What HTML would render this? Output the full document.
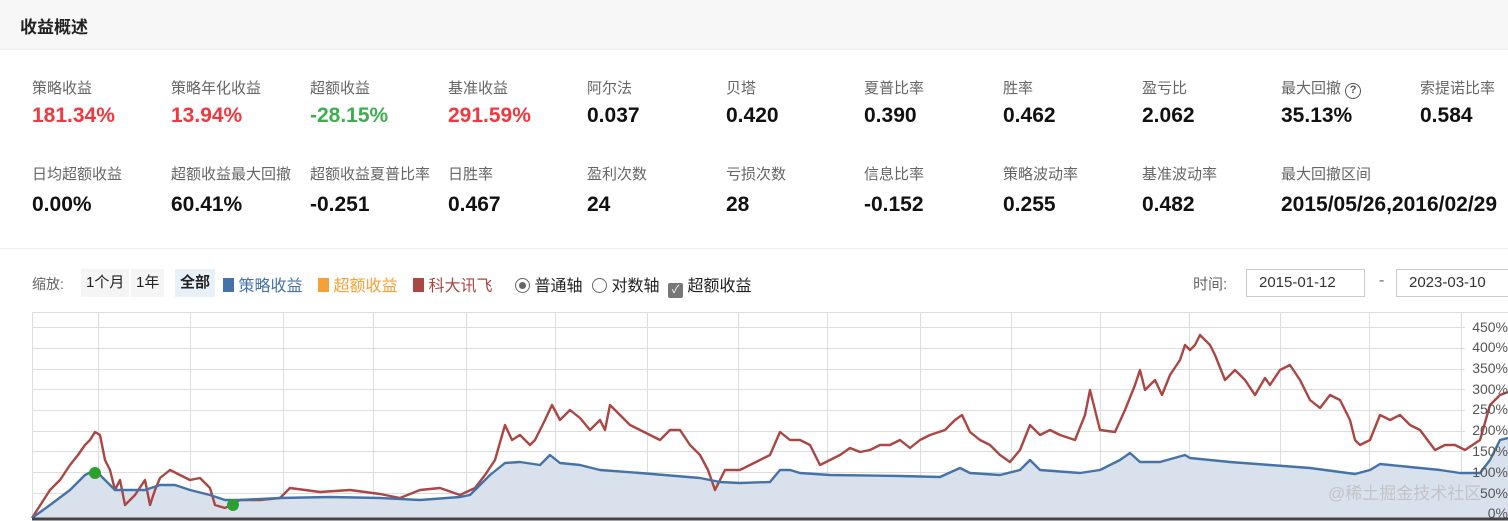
<!DOCTYPE html>
<html><head><meta charset="utf-8"><style>
*{margin:0;padding:0;box-sizing:border-box}
body{width:1508px;height:521px;overflow:hidden;background:#fff;font-family:"Liberation Sans","Noto Sans CJK SC",sans-serif;position:relative;color:#222}
.hd{position:absolute;left:0;top:0;width:1508px;height:50px;background:#f7f7f7;border-bottom:1px solid #eee}
.hd span{position:absolute;left:20px;top:13px;font-size:17px;font-weight:bold;color:#222}
.m{position:absolute;white-space:nowrap}
.l{font-size:15px;color:#666}
.v{font-size:21px;font-weight:bold;color:#111}
.r{color:#f0383f}.g{color:#3fae4f}
.div{position:absolute;left:0;top:248px;width:1508px;height:1px;background:#eee}
.ctl{position:absolute;top:272px;font-size:16px;white-space:nowrap}
.btn{position:absolute;top:269px;height:28px;line-height:28px;padding:0 5px;background:#f5f5f5;font-size:15px}
.inp{position:absolute;top:269px;height:28px;border:1px solid #ccc;font-size:15px;line-height:26px;padding-left:12px;color:#333}
.ax{position:absolute;right:0;width:50px;text-align:right;font-size:14px;color:#555}
</style></head><body>
<div class="hd"><span>收益概述</span></div>
<div class="m l" style="left:32px;top:77px">策略收益</div><div class="m v r" style="left:32px;top:104px">181.34%</div>
<div class="m l" style="left:171px;top:77px">策略年化收益</div><div class="m v r" style="left:171px;top:104px">13.94%</div>
<div class="m l" style="left:310px;top:77px">超额收益</div><div class="m v g" style="left:310px;top:104px">-28.15%</div>
<div class="m l" style="left:448px;top:77px">基准收益</div><div class="m v r" style="left:448px;top:104px">291.59%</div>
<div class="m l" style="left:587px;top:77px">阿尔法</div><div class="m v" style="left:587px;top:104px">0.037</div>
<div class="m l" style="left:726px;top:77px">贝塔</div><div class="m v" style="left:726px;top:104px">0.420</div>
<div class="m l" style="left:864px;top:77px">夏普比率</div><div class="m v" style="left:864px;top:104px">0.390</div>
<div class="m l" style="left:1003px;top:77px">胜率</div><div class="m v" style="left:1003px;top:104px">0.462</div>
<div class="m l" style="left:1142px;top:77px">盈亏比</div><div class="m v" style="left:1142px;top:104px">2.062</div>
<div class="m l" style="left:1281px;top:77px">最大回撤 <span style="display:inline-block;width:16px;height:16px;border:1.5px solid #555;border-radius:50%;font-size:11px;line-height:13px;text-align:center;color:#555;font-weight:bold">?</span></div><div class="m v" style="left:1281px;top:104px">35.13%</div>
<div class="m l" style="left:1420px;top:77px">索提诺比率</div><div class="m v" style="left:1420px;top:104px">0.584</div>
<div class="m l" style="left:32px;top:163px">日均超额收益</div><div class="m v" style="left:32px;top:193px">0.00%</div>
<div class="m l" style="left:171px;top:163px">超额收益最大回撤</div><div class="m v" style="left:171px;top:193px">60.41%</div>
<div class="m l" style="left:310px;top:163px">超额收益夏普比率</div><div class="m v" style="left:310px;top:193px">-0.251</div>
<div class="m l" style="left:448px;top:163px">日胜率</div><div class="m v" style="left:448px;top:193px">0.467</div>
<div class="m l" style="left:587px;top:163px">盈利次数</div><div class="m v" style="left:587px;top:193px">24</div>
<div class="m l" style="left:726px;top:163px">亏损次数</div><div class="m v" style="left:726px;top:193px">28</div>
<div class="m l" style="left:864px;top:163px">信息比率</div><div class="m v" style="left:864px;top:193px">-0.152</div>
<div class="m l" style="left:1003px;top:163px">策略波动率</div><div class="m v" style="left:1003px;top:193px">0.255</div>
<div class="m l" style="left:1142px;top:163px">基准波动率</div><div class="m v" style="left:1142px;top:193px">0.482</div>
<div class="m l" style="left:1281px;top:163px">最大回撤区间</div><div class="m v" style="left:1281px;top:193px">2015/05/26,2016/02/29</div>
<div class="div"></div>
<div class="ctl" style="left:32px;color:#666;font-size:14px;top:274px">缩放:</div>
<div class="btn" style="left:81px">1个月</div>
<div class="btn" style="left:131px">1年</div>
<div class="btn" style="left:175px;background:#e8f0f8;font-weight:bold">全部</div>
<div class="ctl" style="left:223px;color:#4572a7"><span style="display:inline-block;width:11px;height:14px;background:#4572a7;vertical-align:-1px"></span> 策略收益</div>
<div class="ctl" style="left:318px;color:#f7a035"><span style="display:inline-block;width:11px;height:14px;background:#f7a035;vertical-align:-1px"></span> 超额收益</div>
<div class="ctl" style="left:413px;color:#aa4643"><span style="display:inline-block;width:11px;height:14px;background:#aa4643;vertical-align:-1px"></span> 科大讯飞</div>
<div class="ctl" style="left:515px;color:#222"><span style="display:inline-block;width:15px;height:15px;border:1px solid #666;border-radius:50%;vertical-align:-2px;position:relative"><span style="position:absolute;left:3px;top:3px;width:7px;height:7px;border-radius:50%;background:#666"></span></span> 普通轴</div>
<div class="ctl" style="left:592px;color:#222"><span style="display:inline-block;width:15px;height:15px;border:1px solid #666;border-radius:50%;vertical-align:-2px"></span> 对数轴</div>
<div class="ctl" style="left:668px;color:#222"><span style="display:inline-block;width:15px;height:15px;background:#777;border-radius:2px;vertical-align:-2px;color:#fff;font-size:11px;line-height:15px;text-align:center">✓</span> 超额收益</div>
<div class="ctl" style="left:1193px;color:#666;font-size:15px;top:273px">时间:</div>
<div class="inp" style="left:1246px;width:119px">2015-01-12</div>
<div class="ctl" style="left:1379px;color:#666">-</div>
<div class="inp" style="left:1396px;width:120px">2023-03-10</div>
<svg style="position:absolute;left:0;top:0" width="1508" height="521">
<g stroke="#ddd" stroke-width="1">
<line x1="32" y1="312.5" x2="1508" y2="312.5"/>
<line x1="32" y1="327.5" x2="1465" y2="327.5"/><line x1="32" y1="348.5" x2="1465" y2="348.5"/><line x1="32" y1="369.5" x2="1465" y2="369.5"/><line x1="32" y1="389.5" x2="1465" y2="389.5"/><line x1="32" y1="410.5" x2="1465" y2="410.5"/><line x1="32" y1="431.5" x2="1465" y2="431.5"/><line x1="32" y1="451.5" x2="1465" y2="451.5"/><line x1="32" y1="472.5" x2="1465" y2="472.5"/><line x1="32" y1="493.5" x2="1465" y2="493.5"/>
<line x1="32.5" y1="312" x2="32.5" y2="518"/><line x1="98.5" y1="312" x2="98.5" y2="518"/><line x1="190.5" y1="312" x2="190.5" y2="518"/><line x1="283.5" y1="312" x2="283.5" y2="518"/><line x1="373.5" y1="312" x2="373.5" y2="518"/><line x1="466.5" y1="312" x2="466.5" y2="518"/><line x1="555.5" y1="312" x2="555.5" y2="518"/><line x1="647.5" y1="312" x2="647.5" y2="518"/><line x1="738.5" y1="312" x2="738.5" y2="518"/><line x1="827.5" y1="312" x2="827.5" y2="518"/><line x1="920.5" y1="312" x2="920.5" y2="518"/><line x1="1011.5" y1="312" x2="1011.5" y2="518"/><line x1="1100.5" y1="312" x2="1100.5" y2="518"/><line x1="1189.5" y1="312" x2="1189.5" y2="518"/><line x1="1280.5" y1="312" x2="1280.5" y2="518"/><line x1="1369.5" y1="312" x2="1369.5" y2="518"/><line x1="1461.5" y1="312" x2="1461.5" y2="518"/>
</g>
<polygon fill="#d9e2ec" points="32,518 50,505 70,490 85,475 95,470 105,480 115,490 130,490 145,490 160,485 175,485 190,490 210,495 225,500 240,500 280,498 330,497 380,498 420,500 460,497 470,495 480,485 490,475 505,463 520,462 540,465 550,455 560,463 580,465 600,470 640,473 700,478 720,482 740,483 770,482 780,470 790,470 800,473 830,475 900,476 940,477 960,468 970,473 1000,475 1020,470 1030,460 1040,470 1080,473 1100,470 1120,460 1130,453 1140,462 1160,462 1185,455 1190,458 1230,462 1270,465 1310,468 1340,472 1355,474 1370,470 1380,464 1410,467 1440,470 1460,473 1480,473 1490,460 1500,440 1508,438 1508,518"/>
<polyline fill="none" stroke="#aa4643" stroke-width="2.4" stroke-linejoin="round" points="32,518 50,490 60,480 70,465 78,455 85,445 90,440 95,432 100,435 105,460 110,470 115,490 120,480 125,505 135,495 145,480 150,505 155,490 160,478 170,470 180,475 190,480 200,478 210,488 215,505 225,508 240,500 260,500 280,498 290,488 320,492 350,490 380,494 400,498 420,490 440,488 460,495 475,488 485,475 495,460 505,425 512,440 520,435 530,445 535,440 545,420 552,405 560,420 570,410 580,418 590,430 600,420 605,430 610,405 620,415 630,425 640,430 650,435 660,440 670,430 680,430 690,445 700,455 708,470 715,490 725,470 740,470 750,465 760,460 770,455 780,432 790,440 800,440 810,445 820,465 830,460 840,455 850,448 860,452 870,450 880,445 890,445 900,440 910,448 920,440 930,435 945,430 955,420 962,415 970,432 980,440 990,445 1000,455 1010,462 1020,450 1030,425 1040,435 1050,430 1060,435 1075,440 1085,415 1090,390 1095,410 1100,430 1115,432 1125,410 1135,385 1140,370 1145,390 1155,380 1162,395 1170,375 1180,360 1185,345 1190,350 1195,345 1200,335 1205,340 1210,345 1215,355 1225,380 1235,370 1245,380 1255,395 1265,378 1270,385 1280,370 1290,365 1300,380 1310,400 1320,408 1330,395 1340,400 1350,420 1355,440 1360,445 1370,440 1380,415 1390,420 1400,415 1410,425 1420,430 1435,450 1445,445 1455,445 1465,450 1480,440 1490,405 1500,395 1508,392"/>
<polyline fill="none" stroke="#4572a7" stroke-width="2.4" stroke-linejoin="round" points="32,518 50,505 70,490 85,475 95,470 105,480 115,490 130,490 145,490 160,485 175,485 190,490 210,495 225,500 240,500 280,498 330,497 380,498 420,500 460,497 470,495 480,485 490,475 505,463 520,462 540,465 550,455 560,463 580,465 600,470 640,473 700,478 720,482 740,483 770,482 780,470 790,470 800,473 830,475 900,476 940,477 960,468 970,473 1000,475 1020,470 1030,460 1040,470 1080,473 1100,470 1120,460 1130,453 1140,462 1160,462 1185,455 1190,458 1230,462 1270,465 1310,468 1340,472 1355,474 1370,470 1380,464 1410,467 1440,470 1460,473 1480,473 1490,460 1500,440 1508,438"/>
<line x1="32" y1="519" x2="1508" y2="519" stroke="#444" stroke-width="3"/>
<circle cx="95" cy="473" r="6" fill="#2ca02c"/><circle cx="233" cy="505" r="6" fill="#2ca02c"/>
<text x="1328" y="499" font-size="17" fill="#bbb" fill-opacity="0.8" font-family="Liberation Sans,Noto Sans CJK SC,sans-serif">@稀土掘金技术社区</text>
</svg>
<div class="ax" style="top:319px">450%</div><div class="ax" style="top:339px">400%</div><div class="ax" style="top:360px">350%</div><div class="ax" style="top:381px">300%</div><div class="ax" style="top:401px">250%</div><div class="ax" style="top:422px">200%</div><div class="ax" style="top:443px">150%</div><div class="ax" style="top:464px">100%</div><div class="ax" style="top:485px">50%</div><div class="ax" style="top:505px">0%</div>
</body></html>
